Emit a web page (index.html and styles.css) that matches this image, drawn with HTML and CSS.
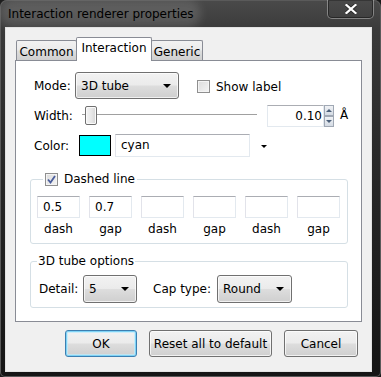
FILE: index.html
```html
<!DOCTYPE html>
<html lang="en">
<head>
    <meta charset="UTF-8">
    <title>Interaction renderer properties</title>
    <link rel="stylesheet" href="styles.css">
</head>
<body>
    <div class="window">
        <div class="titlebar">
            <span class="title">Interaction renderer properties</span>
            <div class="close">
                <svg width="12" height="10" viewBox="0 0 12 10"><path d="M1.5 1 L10.5 9 M10.5 1 L1.5 9" stroke="#2a2a2a" stroke-width="4" stroke-linecap="square"/><path d="M1.5 1 L10.5 9 M10.5 1 L1.5 9" stroke="#fff" stroke-width="2.2" stroke-linecap="square"/></svg>
            </div>
        </div>
        <div class="client">
            <div class="tabs">
                <div class="tab">Common</div>
                <div class="tab active">Interaction</div>
                <div class="tab">Generic</div>
            </div>
            <div class="pane">
                <div class="row row-mode">
                    <span class="lbl">Mode:</span>
                    <div class="combo combo-mode"><span>3D tube</span><i class="arrow"></i></div>
                    <div class="check"><span class="box"></span>Show label</div>
                </div>
                <div class="row row-width">
                    <span class="lbl">Width:</span>
                    <div class="slider"><div class="groove"></div><div class="handle"></div></div>
                    <div class="spin">
                        <span class="spin-field">0.10</span>
                        <span class="spin-btns"><b class="up"></b><b class="down"></b></span>
                    </div>
                    <span class="unit">Å</span>
                </div>
                <div class="row row-color">
                    <span class="lbl">Color:</span>
                    <div class="swatch"></div>
                    <div class="field color-field">cyan</div>
                    <i class="arrow small"></i>
                </div>

                <fieldset class="group dashed">
                    <legend><span class="box checked"><svg width="9" height="9" viewBox="0 0 9 9"><path d="M1 4.5 L3.5 7.5 L8 1" fill="none" stroke="#4a5d9c" stroke-width="1.8"/></svg></span>Dashed line</legend>
                    <div class="dash-grid">
                        <div class="dash-cell"><div class="field">0.5</div><span>dash</span></div>
                        <div class="dash-cell"><div class="field">0.7</div><span>gap</span></div>
                        <div class="dash-cell"><div class="field"></div><span>dash</span></div>
                        <div class="dash-cell"><div class="field"></div><span>gap</span></div>
                        <div class="dash-cell"><div class="field"></div><span>dash</span></div>
                        <div class="dash-cell"><div class="field"></div><span>gap</span></div>
                    </div>
                </fieldset>

                <fieldset class="group tube">
                    <legend>3D tube options</legend>
                    <div class="tube-row">
                        <span class="lbl-detail">Detail:</span>
                        <div class="combo combo-detail"><span>5</span><i class="arrow"></i></div>
                        <span class="lbl-cap">Cap type:</span>
                        <div class="combo combo-cap"><span>Round</span><i class="arrow"></i></div>
                    </div>
                </fieldset>
            </div>
            <div class="buttons">
                <div class="btn btn-ok">OK</div>
                <div class="btn btn-reset">Reset all to default</div>
                <div class="btn btn-cancel">Cancel</div>
            </div>
        </div>
    </div>
</body>
</html>
```
FILE: styles.css
```css
* {
    box-sizing: border-box;
}
body {
    margin: 0;
    background: #1a1a1a;
    font-family: "DejaVu Sans", Verdana, sans-serif;
    font-size: 12px;
    color: #000;
}
.window {
    width: 381px;
    height: 377px;
    padding: 0 9px 5px 5px;
    display: flex;
    flex-direction: column;
    background: linear-gradient(180deg, #4a4a4a 0%, #3a3a3a 8%, #2a2a2a 40%, #151515 100%);
    border-radius: 7px 7px 5px 5px;
    box-shadow: inset 0 0 0 1px #5a5a5a;
}
.titlebar {
    height: 27px;
    display: flex;
    align-items: flex-start;
}
.title {
    margin: 7px 0 0 2px;
    line-height: 14px;
    color: #000;
    padding: 0 0 0 1px;
    background: rgba(255, 255, 255, 0.13);
    box-shadow: 0 0 8px 7px rgba(255, 255, 255, 0.13);
    border-radius: 8px;
}
.close {
    margin-left: auto;
    margin-right: -2px;
    width: 47px;
    height: 19px;
    border: 1px solid rgba(255, 255, 255, 0.35);
    border-top: none;
    border-radius: 0 0 5px 5px;
    box-shadow: inset 0 0 0 1px rgba(0, 0, 0, 0.4);
    display: flex;
    align-items: center;
    justify-content: center;
}
.client {
    height: 345px;
    background: #f0f0f0;
    border: 1px solid #e2e2e2;
    padding: 9px 9px 0 9px;
    display: flex;
    flex-direction: column;
}

/* tabs */
.tabs {
    display: flex;
    align-items: flex-end;
    height: 23px;
    padding-left: 1px;
}
.tab {
    height: 20px;
    padding: 4px 0 0;
    text-align: center;
    border: 1px solid #898c95;
    border-bottom: none;
    background: linear-gradient(180deg, #f2f2f2 0%, #ebebeb 45%, #dddddd 55%, #cfcfcf 100%);
    border-radius: 2px 2px 0 0;
}
.tab:nth-child(1) {
    width: 61px;
}
.tab:nth-child(3) {
    width: 52px;
}
.tab.active {
    width: 76px;
    height: 24px;
    margin: 0 -1px -1px;
    padding-top: 3px;
    background: #fff;
    position: relative;
    z-index: 1;
}
.pane {
    height: 262px;
    background: #fff;
    border: 1px solid #898c95;
    padding: 11px 0 0 18px;
}

/* rows */
.row {
    display: flex;
    align-items: center;
}
.lbl {
    width: 41px;
}
.row-mode {
    height: 27px;
}
.row-width {
    height: 22px;
    margin-top: 6px;
}
.row-color {
    height: 23px;
    margin-top: 7px;
}

.combo {
    height: 100%;
    border: 1px solid #707070;
    border-radius: 3px;
    background: linear-gradient(180deg, #f2f2f2 0%, #ebebeb 48%, #dddddd 52%, #cfcfcf 100%);
    box-shadow: inset 0 0 0 1px rgba(255, 255, 255, 0.7);
    display: flex;
    align-items: center;
    padding: 0 7px 0 5px;
}
.combo span {
    flex: 1;
}
.arrow {
    width: 0;
    height: 0;
    border-left: 4px solid transparent;
    border-right: 4px solid transparent;
    border-top: 4px solid #000;
}
.arrow.small {
    border-left-width: 3px;
    border-right-width: 3px;
    border-top-width: 3px;
    margin-left: 11px;
    margin-top: 2px;
}
.combo-mode {
    width: 104px;
}
.check {
    display: flex;
    align-items: center;
    margin-left: 18px;
    padding-top: 2px;
}
.box {
    width: 13px;
    height: 13px;
    border: 1px solid #8f8f8f;
    background: linear-gradient(135deg, #dcdcdc 0%, #f4f4f4 100%);
    box-shadow: inset 0 0 0 1px #f4f4f4;
    margin-right: 6px;
    display: flex;
    align-items: center;
    justify-content: center;
}

/* slider + spin */
.slider {
    width: 187px;
    height: 100%;
    position: relative;
}
.groove {
    margin: 9px 5px 0 7px;
    height: 2px;
    border-top: 1px solid #a0a0a0;
    border-bottom: 1px solid #fff;
}
.handle {
    position: absolute;
    left: 10px;
    top: 1px;
    width: 12px;
    height: 19px;
    border: 1px solid #707070;
    border-radius: 2px;
    background: linear-gradient(90deg, #f4f4f4 0%, #e8e8e8 50%, #d6d6d6 100%);
    box-shadow: inset 0 0 0 1px #fafafa;
}
.spin {
    display: flex;
    height: 100%;
    margin-left: 5px;
}
.spin-field {
    width: 57px;
    border: 1px solid #e3e9ef;
    border-top-color: #abadb3;
    text-align: right;
    padding: 3px 1px 0 0;
}
.spin-btns {
    width: 10px;
    display: flex;
    flex-direction: column;
}
.spin-btns b {
    flex: 1;
    border: 1px solid #a0a8b4;
    background: linear-gradient(180deg, #f0f2f5, #d4dbe4);
    display: flex;
    align-items: center;
    justify-content: center;
}
.spin-btns b::after {
    content: "";
    border-left: 3px solid transparent;
    border-right: 3px solid transparent;
}
.spin-btns .up::after {
    border-bottom: 3px solid #4c607a;
}
.spin-btns .down::after {
    border-top: 3px solid #4c607a;
}
.unit {
    margin-left: 6px;
    margin-top: -2px;
}

/* color */
.swatch {
    width: 32px;
    height: 21px;
    margin-left: 4px;
    background: #00ffff;
    border: 1px solid #000;
}
.field {
    border: 1px solid #e3e9ef;
    border-top-color: #abadb3;
    border-left-color: #e2e3ea;
    background: #fff;
    padding: 3px 5px 0;
}
.color-field {
    width: 135px;
    height: 100%;
    margin-left: 4px;
}

/* groups */
.group {
    width: 318px;
    margin: 15px 0 0 -4px;
    padding: 0 6px 6px;
    border: 1px solid #d5dfe5;
    border-radius: 3px;
}
.group legend {
    padding: 0 2px;
    line-height: 14px;
}
.dashed legend {
    margin-left: 6px;
    display: flex;
    align-items: center;
}
.dashed .box {
    margin-right: 6px;
}
.dash-grid {
    display: flex;
    gap: 9px;
    margin-top: 10px;
}
.dash-cell {
    width: 43px;
    display: flex;
    flex-direction: column;
    align-items: center;
}
.dash-cell .field {
    width: 100%;
    height: 22px;
}
.dash-cell span {
    margin-top: 4px;
    line-height: 15px;
}
.tube {
    margin-top: 10px;
    padding-bottom: 4px;
}
.tube legend {
    padding: 0 1px;
}
.tube-row {
    display: flex;
    align-items: center;
    height: 28px;
    margin-top: 7px;
    padding-left: 2px;
}
.lbl-detail {
    width: 44px;
}
.combo-detail {
    width: 54px;
}
.lbl-cap {
    margin-left: 16px;
    width: 64px;
}
.combo-cap {
    width: 75px;
}

/* buttons */
.buttons {
    display: flex;
    justify-content: flex-end;
    gap: 12px;
    margin-top: 8px;
    padding-right: 4px;
}
.btn {
    height: 27px;
    border: 1px solid #707070;
    border-radius: 3px;
    background: linear-gradient(180deg, #f2f2f2 0%, #ebebeb 48%, #dddddd 52%, #cfcfcf 100%);
    box-shadow: inset 0 0 0 1px rgba(255, 255, 255, 0.7);
    display: flex;
    align-items: center;
    justify-content: center;
}
.btn-ok {
    width: 72px;
    border-color: #3c7fb1;
    box-shadow: inset 0 0 0 1px #7fd3f6, inset 0 0 0 2px rgba(190, 235, 252, 0.7);
}
.btn-reset {
    width: 123px;
}
.btn-cancel {
    width: 74px;
}
```
